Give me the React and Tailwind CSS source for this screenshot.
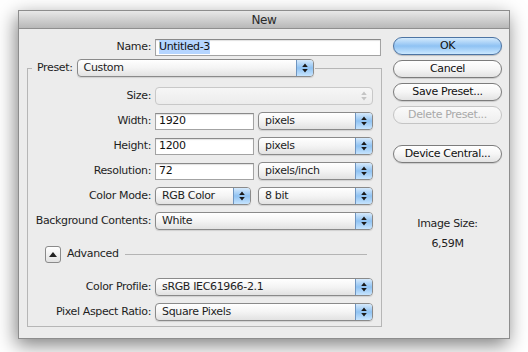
import React from "react";

const Arrows = ({ color = "#1a1a1a" }) => (
  <svg width="6" height="10" viewBox="0 0 6 10">
    <path d="M3 0.5 L5.8 4 H0.2Z M3 9.5 L0.2 6 H5.8Z" fill={color} />
  </svg>
);

function Select({ cls, text, disabled }) {
  return (
    <div
      className={`flex h-[18px] items-stretch overflow-hidden rounded-[4px] border ${
        disabled
          ? "border-[#c8c8c8] bg-gradient-to-b from-[#f6f6f6] to-[#ececec]"
          : "border-[#8a8a8a] bg-gradient-to-b from-white via-[#f4f4f4] to-[#e2e2e2] shadow-[0_1px_1px_rgba(0,0,0,0.12)]"
      } ${cls}`}
    >
      <div className="flex-1 pl-[6px] text-[11px] leading-[16px] whitespace-nowrap text-[#1e1e1e]">
        {text}
      </div>
      {disabled ? (
        <div className="flex w-[17px] items-center justify-center">
          <Arrows color="#c4c4c4" />
        </div>
      ) : (
        <div className="flex w-[17px] items-center justify-center border-l border-[#6f95c0] bg-gradient-to-b from-[#d6eafc] via-[#8fc2f2] to-[#c6e4fe]">
          <Arrows />
        </div>
      )}
    </div>
  );
}

function Field({ cls, children }) {
  return (
    <div
      className={`flex h-[17px] items-center border border-[#a3a3a3] border-t-[#8a8a8a] bg-white pl-[3px] text-[11px] text-[#111] shadow-[inset_0_1px_1px_rgba(0,0,0,0.12)] ${cls}`}
    >
      {children}
    </div>
  );
}

function Row({ label, children, lw = "w-[127px]" }) {
  return (
    <div className="flex h-[18px] items-center">
      <div className={`${lw} pr-[4px] text-right text-[11px] whitespace-nowrap text-[#1e1e1e]`}>
        {label}
      </div>
      {children}
    </div>
  );
}

function Btn({ children, primary, disabled }) {
  return (
    <div
      className={`flex h-[18px] w-[109px] items-center justify-center rounded-full border text-[11px] ${
        primary
          ? "border-[#4d74a3] bg-gradient-to-b from-[#d4eafc] via-[#8fc2f3] to-[#cbe8ff] text-[#111] shadow-[0_1px_1px_rgba(0,0,0,0.2)]"
          : disabled
          ? "border-[#c4c4c4] bg-gradient-to-b from-[#fafafa] to-[#eeeeee] text-[#a9a9a9]"
          : "border-[#7c7c7c] bg-gradient-to-b from-white via-[#f6f6f6] to-[#e3e3e3] text-[#111] shadow-[0_1px_1px_rgba(0,0,0,0.15)]"
      }`}
    >
      {children}
    </div>
  );
}

export default function App() {
  return (
    <div
      className="h-[352px] w-[528px] overflow-hidden bg-white pt-[10px] pl-[18px] tracking-[-0.35px]"
      style={{ fontFamily: '"DejaVu Sans", "Liberation Sans", sans-serif' }}
    >
      <div className="flex h-[329px] w-[492px] flex-col border border-[#8d8d8d] bg-[#ececec] shadow-[-2px_6px_18px_rgba(0,0,0,0.5)]">
        <div className="flex h-[18px] items-center justify-center border-b border-[#8f8f8f] bg-gradient-to-b from-[#e8e8e8] to-[#b8b8b8] text-[12px] text-[#2a2a2a]">
          New
        </div>
        <div className="flex flex-1">
          {/* left column */}
          <div className="flex w-[363px] flex-col pt-[9px] pl-[8px]">
            <Row label="Name:" lw="w-[128px]">
              <Field cls="w-[226px]">
                <span className="bg-[#b5d5ff] leading-[14px]">Untitled-3</span>
              </Field>
            </Row>
            <fieldset className="mt-[3px] h-[268px] w-[355px] border border-[#b6b6b6] px-0 pb-0">
              <legend className="ml-[4px] flex items-center px-[5px] pr-[1px]">
                <span className="pr-[4px] text-[11px] text-[#1e1e1e]">Preset:</span>
                <Select cls="w-[237px]" text="Custom" />
              </legend>
              <div className="mt-[10px] flex flex-col gap-[7px]">
                <Row label="Size:">
                  <Select cls="w-[218px]" text="" disabled />
                </Row>
                <Row label="Width:">
                  <Field cls="w-[99px]">1920</Field>
                  <Select cls="ml-[4px] w-[115px]" text="pixels" />
                </Row>
                <Row label="Height:">
                  <Field cls="w-[99px]">1200</Field>
                  <Select cls="ml-[4px] w-[115px]" text="pixels" />
                </Row>
                <Row label="Resolution:">
                  <Field cls="w-[99px]">72</Field>
                  <Select cls="ml-[4px] w-[115px]" text="pixels/inch" />
                </Row>
                <Row label="Color Mode:">
                  <Select cls="w-[96px]" text="RGB Color" />
                  <Select cls="ml-[7px] w-[115px]" text="8 bit" />
                </Row>
                <Row label="Background Contents:">
                  <Select cls="w-[218px]" text="White" />
                </Row>
              </div>
              <div className="mt-[15px] flex h-[18px] items-center pl-[17px]">
                <div className="flex h-[17px] w-[16px] items-center justify-center rounded-[3px] border border-[#8a8a8a] bg-gradient-to-b from-white to-[#e2e2e2]">
                  <svg width="8" height="5" viewBox="0 0 8 5">
                    <path d="M4 0 L8 5 H0Z" fill="#222" />
                  </svg>
                </div>
                <span className="ml-[6px] text-[11px] text-[#1e1e1e]">Advanced</span>
                <div className="ml-[6px] h-px w-[242px] bg-[#b4b4b4]" />
              </div>
              <div className="mt-[15px] flex flex-col gap-[7px]">
                <Row label="Color Profile:">
                  <Select cls="w-[218px]" text="sRGB IEC61966-2.1" />
                </Row>
                <Row label="Pixel Aspect Ratio:">
                  <Select cls="w-[218px]" text="Square Pixels" />
                </Row>
              </div>
            </fieldset>
          </div>
          {/* right column */}
          <div className="flex flex-col pt-[8px] pl-[11px]">
            <div className="flex flex-col gap-[5px]">
              <Btn primary>OK</Btn>
              <Btn>Cancel</Btn>
              <Btn>Save Preset...</Btn>
              <Btn disabled>Delete Preset...</Btn>
            </div>
            <div className="mt-[21px]">
              <Btn>Device Central...</Btn>
            </div>
            <div className="mt-[54px] text-center text-[11px] leading-[14px] text-[#1e1e1e]">
              Image Size:
            </div>
            <div className="mt-[6px] text-center text-[11px] leading-[14px] text-[#1e1e1e]">
              6,59M
            </div>
          </div>
        </div>
      </div>
    </div>
  );
}
